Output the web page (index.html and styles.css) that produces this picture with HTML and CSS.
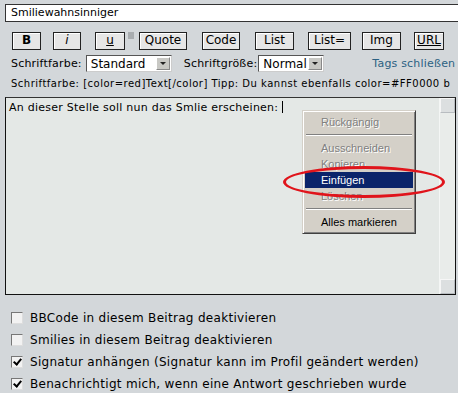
FILE: index.html
```html
<!DOCTYPE html>
<html>
<head>
  <title>Beitrag schreiben</title>
  <link rel="stylesheet" href="styles.css">
</head>
<body>
  <div class="subject">Smiliewahnsinniger</div>

  <div class="toolbar">
    <span class="btn w-b"><b>B</b></span>
    <span class="btn w-i"><i>i</i></span>
    <span class="btn w-u"><u>u</u></span>
    <span class="grip"></span>
    <span class="btn w-quote">Quote</span>
    <span class="btn w-code">Code</span>
    <span class="btn w-list">List</span>
    <span class="btn w-listeq">List=</span>
    <span class="btn w-img">Img</span>
    <span class="btn w-url"><u>URL</u></span>
  </div>

  <div class="fontrow">
    <span class="lbl">Schriftfarbe:</span>
    <span class="select sel-color">Standard<span class="arrow"></span></span>
    <span class="lbl lbl-size">Schriftgröße:</span>
    <span class="select sel-size">Normal<span class="arrow"></span></span>
    <span class="closetags">Tags schließen</span>
  </div>

  <div class="hint">Schriftfarbe: [color=red]Text[/color] Tipp: Du kannst ebenfalls color=#FF0000 b</div>

  <div class="editor">
    <div class="text">An dieser Stelle soll nun das Smlie erscheinen: <span class="caret"></span></div>
    <div class="scrollbar">
      <span class="sb-btn"></span>
      <span class="sb-btn"></span>
    </div>

    <ul class="menu">
      <li class="off">Rückgängig</li>
      <li class="sep"></li>
      <li class="off">Ausschneiden</li>
      <li class="off">Kopieren</li>
      <li class="active">Einfügen</li>
      <li class="off">Löschen</li>
      <li class="sep"></li>
      <li>Alles markieren</li>
    </ul>
    <div class="ring"></div>
  </div>

  <div class="options">
    <div class="opt"><span class="box"></span>BBCode in diesem Beitrag deaktivieren</div>
    <div class="opt"><span class="box"></span>Smilies in diesem Beitrag deaktivieren</div>
    <div class="opt"><span class="box checked"></span>Signatur anhängen (Signatur kann im Profil geändert werden)</div>
    <div class="opt"><span class="box checked"></span>Benachrichtigt mich, wenn eine Antwort geschrieben wurde</div>
  </div>
</body>
</html>
```

FILE: styles.css
```css
body {
  margin: 0;
  background: #d3d7da;
  font-family: "DejaVu Sans", Verdana, sans-serif;
  font-size: 11px;
  letter-spacing: 0.2px;
  color: #000;
  overflow: hidden;
}

.subject {
  margin: 4px 0 0 5px;
  width: 460px;
  height: 16px;
  line-height: 16px;
  padding-left: 5px;
  background: #fff;
  border: 1px solid #333;
  letter-spacing: 0;
}

/* buttons */
.toolbar {
  display: flex;
  align-items: flex-start;
  margin: 10px 0 0 12px;
  height: 18px;
}

.btn {
  box-sizing: border-box;
  height: 18px;
  line-height: 15px;
  text-align: center;
  font-size: 12px;
  letter-spacing: 0;
  background: #e6e6e6;
  border: 1px solid #222;
  box-shadow: inset 1px 1px 0 #fff;
  margin-right: 12px;
}

.w-b { width: 29px; }
.w-i { width: 28px; margin-right: 14px; }
.w-u { width: 30px; margin-right: 3px; }
.w-quote { width: 48px; margin-right: 15px; }
.w-code { width: 38px; margin-right: 15px; }
.w-list { width: 39px; margin-right: 14px; }
.w-listeq { width: 43px; margin-right: 11px; }
.w-img { width: 39px; margin-right: 13px; }
.w-url { width: 30px; }

.grip {
  width: 6px;
  height: 7px;
  background: #a9adb0;
  margin-right: 5px;
}

.fontrow {
  display: flex;
  align-items: center;
  margin: 5px 0 0 11px;
  height: 17px;
}

.lbl { margin-right: 4px; }
.lbl-size { margin-left: 12px; margin-right: 1px; }

.select {
  box-sizing: border-box;
  display: flex;
  justify-content: space-between;
  align-items: center;
  height: 17px;
  padding: 0 1px 0 4px;
  background: #fff;
  border: 1px solid #555;
  border-right-color: #ccc;
  border-bottom-color: #ccc;
  font-size: 12px;
  letter-spacing: 0;
}

.sel-color { width: 86px; }
.sel-size { width: 66px; }

.arrow {
  box-sizing: border-box;
  width: 14px;
  height: 13px;
  background: #c8c8c4;
  border: 1px solid #888;
  border-top-color: #fff;
  border-left-color: #fff;
  position: relative;
}

.arrow::after {
  content: "";
  position: absolute;
  left: 3px;
  top: 4px;
  border: 3px solid transparent;
  border-top: 3px solid #222;
}

.closetags {
  margin-left: 48px;
  color: #2b6182;
}

.hint {
  margin: 6px 0 0 11px;
  font-size: 10px;
  letter-spacing: 0.5px;
  white-space: nowrap;
  height: 13px;
}

/* textarea with context menu */
.editor {
  position: relative;
  display: flex;
  margin: 6px 0 0 5px;
  width: 451px;
  height: 198px;
  box-sizing: border-box;
  background: #e4e8e6;
  border: 1px solid #111;
  border-top-color: #333;
}

.text {
  flex: 1;
  padding: 3px 0 0 3px;
  letter-spacing: 0.25px;
}

.caret {
  display: inline-block;
  width: 1px;
  height: 12px;
  background: #000;
  vertical-align: -2px;
}

.scrollbar {
  width: 15px;
  display: flex;
  flex-direction: column;
  justify-content: space-between;
  background: #e9ecea;
  border-left: 1px solid #f4f6f5;
}

.sb-btn {
  height: 15px;
  background: #dcdfe0;
  border: 1px solid #b8bcc0;
  border-top-color: #f6f6f6;
  border-left-color: #f6f6f6;
  box-sizing: border-box;
}

.menu {
  position: absolute;
  left: 296px;
  top: 12px;
  width: 114px;
  margin: 0;
  padding: 3px 2px;
  box-sizing: border-box;
  list-style: none;
  background: #d4d0c8;
  border: 1px solid #404040;
  border-top-color: #d4d0c8;
  border-left-color: #d4d0c8;
  box-shadow: inset 1px 1px 0 #fff, inset -1px -1px 0 #808080;
  font-family: "Liberation Sans", Arial, sans-serif;
  font-size: 11px;
  letter-spacing: 0;
}

.menu li {
  height: 16px;
  line-height: 16px;
  padding-left: 16px;
}

.menu li.off {
  color: #808080;
  text-shadow: 1px 1px 0 #fff;
}

.menu li.sep {
  height: 0;
  margin: 4px 1px;
  border-top: 1px solid #808080;
  border-bottom: 1px solid #fff;
}

.menu li.active {
  background: #0a246a;
  color: #fff;
}

.ring {
  position: absolute;
  left: 277px;
  top: 68px;
  width: 156px;
  height: 26px;
  border: 3px solid #e0141b;
  border-radius: 50%;
}

/* checkboxes */
.options {
  margin: 12px 0 0 11px;
  font-size: 12px;
  letter-spacing: 0.3px;
}

.opt {
  display: flex;
  align-items: center;
  height: 22px;
}

.box {
  box-sizing: border-box;
  width: 12px;
  height: 12px;
  margin-right: 7px;
  background: #f2f2f2;
  border: 1px solid #ddd;
  border-top-color: #777;
  border-left-color: #777;
  position: relative;
}

.box.checked::after {
  content: "";
  position: absolute;
  left: 3px;
  top: 0;
  width: 3px;
  height: 6px;
  border: solid #000;
  border-width: 0 2px 2px 0;
  transform: rotate(40deg);
}
```
